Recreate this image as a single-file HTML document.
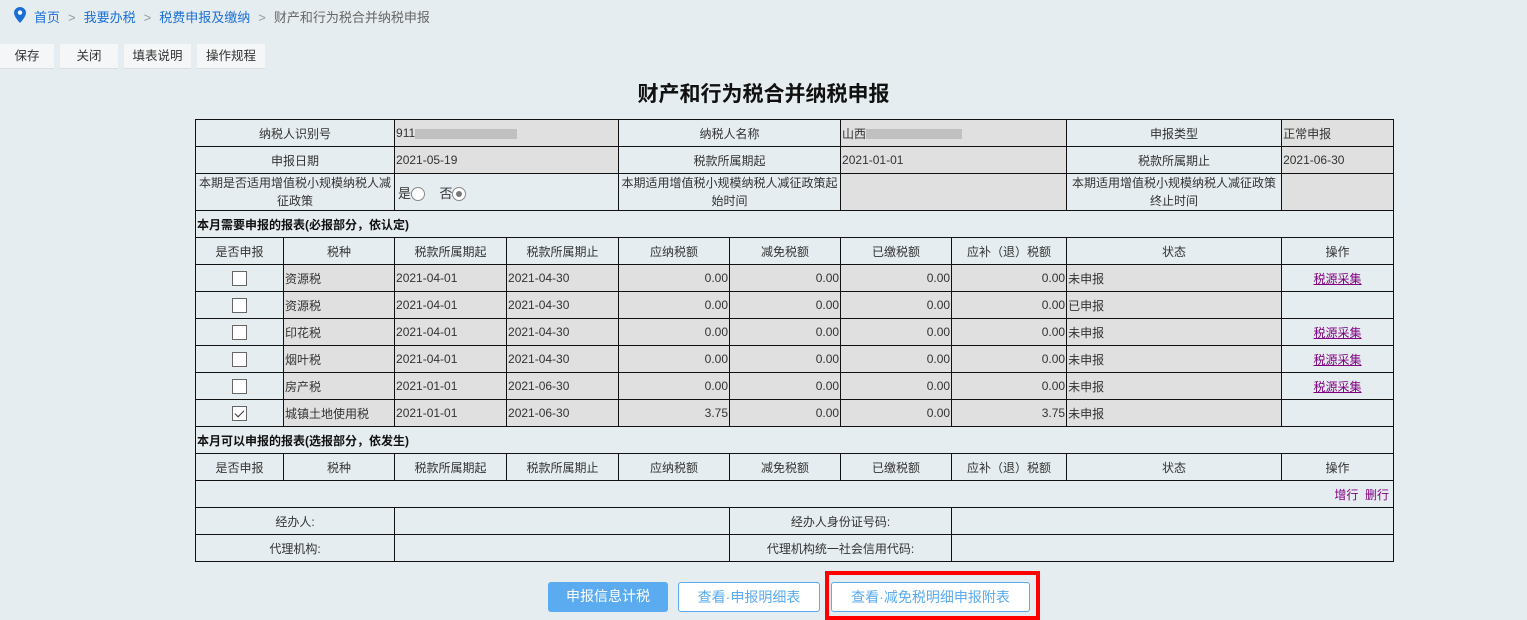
<!DOCTYPE html>
<html><head><meta charset="utf-8"><style>
*{margin:0;padding:0;box-sizing:border-box}
body{width:1527px;height:620px;overflow:hidden;background:#e6edf0;font-family:"Liberation Sans","Noto Sans CJK SC",sans-serif;font-size:12px;color:#333;position:relative}
.bc{position:absolute;left:14px;top:7px;font-size:13px;color:#666;white-space:nowrap}
.bc a{color:#1a6fd6;text-decoration:none}
.bc .sep{color:#999;margin:0 8px}
.tb{position:absolute;top:44px;left:0;display:flex}
.tb div{height:25px;line-height:25px;background:#f5f6f7;border-bottom:1px solid #ddd;font-size:12.5px;color:#333;text-align:center;margin-right:6px}
h1{position:absolute;top:78px;left:0;width:1527px;text-align:center;font-size:21px;font-weight:bold;color:#111}
table{position:absolute;left:195px;top:119px;border-collapse:collapse;table-layout:fixed;width:1198px}
td{border:1px solid #111;padding:0 1px;height:27px;font-size:12px;color:#333;white-space:nowrap;overflow:hidden}
td.c{text-align:center}
td.g{background:#e0e0e0}
td.r{text-align:right}
td.sec{font-weight:bold;color:#111}
.cb{display:inline-block;width:15px;height:15px;border:1px solid #666;background:#fff;vertical-align:middle;position:relative}
.cb.on:after{content:"";position:absolute;left:4px;top:1px;width:4px;height:8px;border:solid #333;border-width:0 1px 1px 0;transform:rotate(45deg)}
.rd{display:inline-block;width:14px;height:14px;border:1px solid #888;border-radius:50%;background:#fff;vertical-align:middle;position:relative}
.rd.on:after{content:"";position:absolute;left:3px;top:3px;width:6px;height:6px;border-radius:50%;background:#777}
a.l{color:#800080;text-decoration:underline}
.mask{display:inline-block;width:102px;height:10px;background:#c0c0c0;vertical-align:middle}
.btn{position:absolute;top:582px;height:30px;line-height:28px;text-align:center;font-size:14px;border-radius:3px}
</style></head><body>
<div class="bc"><svg width="12" height="16" viewBox="0 0 12 16" style="vertical-align:-1px;margin-right:8px"><path d="M6 0C2.7 0 0 2.6 0 5.8 0 10 6 16 6 16s6-6 6-10.2C12 2.6 9.3 0 6 0z" fill="#1a6fd6"/><circle cx="6" cy="5.6" r="2.2" fill="#fff"/></svg><a>首页</a><span class="sep">&gt;</span><a>我要办税</a><span class="sep">&gt;</span><a>税费申报及缴纳</a><span class="sep">&gt;</span>财产和行为税合并纳税申报</div>
<div class="tb"><div style="width:54px">保存</div><div style="width:58px">关闭</div><div style="width:67px">填表说明</div><div style="width:68px">操作规程</div></div>
<h1>财产和行为税合并纳税申报</h1>
<table>
<colgroup><col style="width:88px"><col style="width:111px"><col style="width:112px"><col style="width:112px"><col style="width:111px"><col style="width:111px"><col style="width:111px"><col style="width:115px"><col style="width:215px"><col style="width:112px"></colgroup>
<tr><td class="c" colspan="2">纳税人识别号</td><td class="g" colspan="2">911<span class="mask"></span></td><td class="c" colspan="2">纳税人名称</td><td class="g" colspan="2">山西<span class="mask" style="width:96px"></span></td><td class="c">申报类型</td><td class="g">正常申报</td></tr>
<tr><td class="c" colspan="2">申报日期</td><td class="g" colspan="2">2021-05-19</td><td class="c" colspan="2">税款所属期起</td><td class="g" colspan="2">2021-01-01</td><td class="c">税款所属期止</td><td class="g">2021-06-30</td></tr>
<tr style="height:37px"><td class="c" colspan="2" style="white-space:normal;line-height:18px">本期是否适用增值税小规模纳税人减征政策</td><td colspan="2" style="padding-left:3px;font-size:13px">是<span class="rd"></span>&nbsp;&nbsp;&nbsp; 否<span class="rd on"></span></td><td class="c" colspan="2" style="white-space:normal;line-height:18px">本期适用增值税小规模纳税人减征政策起始时间</td><td class="g" colspan="2"></td><td class="c" style="white-space:normal;line-height:18px">本期适用增值税小规模纳税人减征政策终止时间</td><td class="g"></td></tr>
<tr><td class="sec" colspan="10">本月需要申报的报表(必报部分，依认定)</td></tr>
<tr><td class="c">是否申报</td><td class="c">税种</td><td class="c">税款所属期起</td><td class="c">税款所属期止</td><td class="c">应纳税额</td><td class="c">减免税额</td><td class="c">已缴税额</td><td class="c">应补（退）税额</td><td class="c">状态</td><td class="c">操作</td></tr>
<tr><td class="c"><span class="cb"></span></td><td class="g">资源税</td><td class="g">2021-04-01</td><td class="g">2021-04-30</td><td class="g r">0.00</td><td class="g r">0.00</td><td class="g r">0.00</td><td class="g r">0.00</td><td class="g">未申报</td><td class="c"><a class="l">税源采集</a></td></tr>
<tr><td class="c"><span class="cb"></span></td><td class="g">资源税</td><td class="g">2021-04-01</td><td class="g">2021-04-30</td><td class="g r">0.00</td><td class="g r">0.00</td><td class="g r">0.00</td><td class="g r">0.00</td><td class="g">已申报</td><td></td></tr>
<tr><td class="c"><span class="cb"></span></td><td class="g">印花税</td><td class="g">2021-04-01</td><td class="g">2021-04-30</td><td class="g r">0.00</td><td class="g r">0.00</td><td class="g r">0.00</td><td class="g r">0.00</td><td class="g">未申报</td><td class="c"><a class="l">税源采集</a></td></tr>
<tr><td class="c"><span class="cb"></span></td><td class="g">烟叶税</td><td class="g">2021-04-01</td><td class="g">2021-04-30</td><td class="g r">0.00</td><td class="g r">0.00</td><td class="g r">0.00</td><td class="g r">0.00</td><td class="g">未申报</td><td class="c"><a class="l">税源采集</a></td></tr>
<tr><td class="c"><span class="cb"></span></td><td class="g">房产税</td><td class="g">2021-01-01</td><td class="g">2021-06-30</td><td class="g r">0.00</td><td class="g r">0.00</td><td class="g r">0.00</td><td class="g r">0.00</td><td class="g">未申报</td><td class="c"><a class="l">税源采集</a></td></tr>
<tr><td class="c"><span class="cb on"></span></td><td class="g">城镇土地使用税</td><td class="g">2021-01-01</td><td class="g">2021-06-30</td><td class="g r">3.75</td><td class="g r">0.00</td><td class="g r">0.00</td><td class="g r">3.75</td><td class="g">未申报</td><td></td></tr>
<tr><td class="sec" colspan="10">本月可以申报的报表(选报部分，依发生)</td></tr>
<tr><td class="c">是否申报</td><td class="c">税种</td><td class="c">税款所属期起</td><td class="c">税款所属期止</td><td class="c">应纳税额</td><td class="c">减免税额</td><td class="c">已缴税额</td><td class="c">应补（退）税额</td><td class="c">状态</td><td class="c">操作</td></tr>
<tr><td colspan="10" class="r" style="padding-right:4px;color:#800080">增行&nbsp;&nbsp;删行</td></tr>
<tr><td class="c" colspan="2">经办人:</td><td colspan="3"></td><td class="c" colspan="2">经办人身份证号码:</td><td colspan="3"></td></tr>
<tr><td class="c" colspan="2">代理机构:</td><td colspan="3"></td><td class="c" colspan="2">代理机构统一社会信用代码:</td><td colspan="3"></td></tr>
</table>
<div class="btn" style="left:548px;width:120px;background:#5aabef;color:#fff">申报信息计税</div>
<div class="btn" style="left:678px;width:142px;background:#fff;border:1px solid #5aabef;color:#5aabef">查看·申报明细表</div>
<div style="position:absolute;left:825px;top:571px;width:215px;height:49px;border:4px solid #f00"></div>
<div class="btn" style="left:831px;width:199px;background:#fff;border:1px solid #5aabef;color:#5aabef">查看·减免税明细申报附表</div>
</body></html>
